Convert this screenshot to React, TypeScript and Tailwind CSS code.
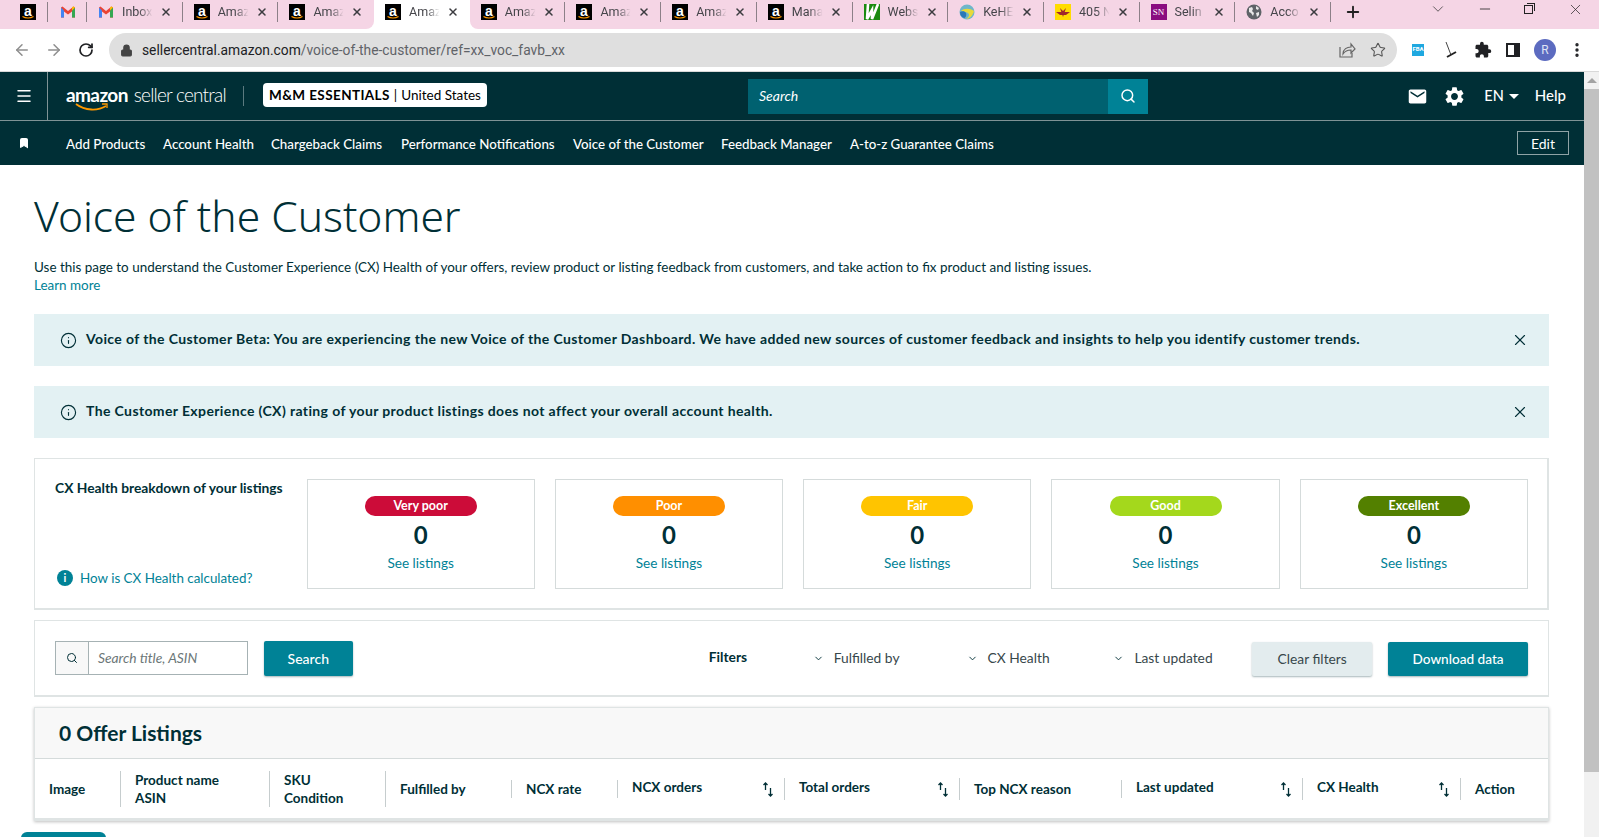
import React from "react";
import { ArrowLeft, ArrowRight, RotateCw, Lock, Star, Plus, X, Minus, ChevronDown, Search, Menu, Bookmark, Info, EllipsisVertical } from "lucide-react";
import { MdMail, MdSettings, MdExtension } from "react-icons/md";

const AmazonIcon = () => (
  <svg width="16" height="16" viewBox="0 0 16 16" className="shrink-0">
    <rect width="16" height="16" fill="#000" />
    <text x="8" y="11.5" textAnchor="middle" fontSize="14" fontWeight="700" fill="#fff" fontFamily="Liberation Sans, sans-serif">a</text>
    <path d="M2.5 12.5c3 2 8 2 11 0" stroke="#f90" strokeWidth="1.2" fill="none" />
  </svg>
);
const GmailIcon = () => (
  <svg width="16" height="16" viewBox="0 0 16 16" className="shrink-0">
    <path d="M1 3.5v10h3v-6l4 3 4-3v6h3v-10l-1.500-1L8 7 2.500 2.500z" fill="#ea4335" />
    <path d="M1 3.500v10h3v-7z" fill="#4285f4" />
    <path d="M15 3.500v10h-3v-7z" fill="#34a853" />
    <path d="M12 6.500V3l1.500-.5L15 3.500z" fill="#fbbc04" />
  </svg>
);
const WebsIcon = () => (
  <svg width="16" height="16" viewBox="0 0 16 16" className="shrink-0">
    <rect width="16" height="16" fill="#1a8a10" />
    <path d="M4 0l-1 15 5-9 0 9 6-15" stroke="#fff" strokeWidth="2.600" fill="none" />
  </svg>
);
const KeheIcon = () => (
  <svg width="16" height="16" viewBox="0 0 16 16" className="shrink-0">
    <circle cx="8" cy="8" r="7.500" fill="#6fb6c9" />
    <path d="M2 7c3-3 9-3 13 0-1 5-5 8-8 8 3-2 4-4 2-6-2-1-5-2-7-2z" fill="#e8d93a" />
    <path d="M1 8c2-1 5-1 6 1 1 3-1 5-2 5-3-1-4-3-4-6z" fill="#2a78b8" />
  </svg>
);
const FourOhFiveIcon = () => (
  <svg width="16" height="16" viewBox="0 0 16 16" className="shrink-0">
    <rect width="16" height="16" fill="#ffdc00" />
    <path d="M1 8h14l-4 3H5z" fill="#a0282c" />
    <path d="M5 4l3 9 3-9-3 3z" fill="#a0282c" />
  </svg>
);
const SnIcon = () => (
  <div className="w-4 h-4 shrink-0 bg-[#8a0c80] text-white text-[9px] leading-4 text-center font-['Liberation_Serif',serif]">SN</div>
);
const GlobeIcon = () => (
  <svg width="16" height="16" viewBox="0 0 16 16" className="shrink-0">
    <circle cx="8" cy="8" r="7.500" fill="#5f6368" />
    <path d="M3 4l3-1 1 2-1 2 2 2-1 3-2-3-2-1zM10 2l3 2-1 2-2-1zM10 9l3-1 0 3-2 2z" fill="#e8e8e8" />
  </svg>
);

type TabDef = { icon: React.ReactNode; label: string; round?: string; active?: boolean; sep?: boolean };
const tabs: TabDef[] = [
  { icon: <GmailIcon />, label: "Inbox", sep: true },
  { icon: <AmazonIcon />, label: "Amaz", sep: true },
  { icon: <AmazonIcon />, label: "Amaz", round: "rounded-br-lg" },
  { icon: <AmazonIcon />, label: "Amaz", active: true },
  { icon: <AmazonIcon />, label: "Amaz", round: "rounded-bl-lg", sep: true },
  { icon: <AmazonIcon />, label: "Amaz", sep: true },
  { icon: <AmazonIcon />, label: "Amaz", sep: true },
  { icon: <AmazonIcon />, label: "Mana", sep: true },
  { icon: <WebsIcon />, label: "Webs", sep: true },
  { icon: <KeheIcon />, label: "KeHE", sep: true },
  { icon: <FourOhFiveIcon />, label: "405 N", sep: true },
  { icon: <SnIcon />, label: "Selin", sep: true },
  { icon: <GlobeIcon />, label: "Acco", sep: true },
];

const TabStrip = () => (
  <div className="flex h-[29px] bg-white font-['Roboto',sans-serif]">
    <div className="w-[47.500px] bg-[#f5d5e5] flex items-start pt-1 pl-5 relative">
      <AmazonIcon />
      <span className="absolute right-0 top-[2px] h-5 w-px bg-[#8c8088]" />
    </div>
    <div className="w-[39.500px] bg-[#f5d5e5] flex items-start pt-1 pl-3 relative">
      <GmailIcon />
      <span className="absolute right-0 top-[2px] h-5 w-px bg-[#8c8088]" />
    </div>
    {tabs.map((t, i) => (
      <div key={i} className={`w-[95.700px] relative flex items-start pt-1 pl-[11px] ${t.active ? "bg-white" : "bg-[#f5d5e5]"} ${t.round ?? ""}`}>
        {t.icon}
        <span className="ml-[8px] w-[34px] whitespace-nowrap text-[12.500px] leading-4 text-[#45454a] [mask-image:linear-gradient(to_right,black_50%,transparent_90%)]">{t.label}</span>
        <X size={12} strokeWidth={3} className="ml-[4px] mt-[2px] text-[#3c3c40]" />
        {t.sep && <span className="absolute right-0 top-[2px] h-5 w-px bg-[#8c8088]" />}
      </div>
    ))}
    <div className="flex-1 bg-[#f5d5e5] flex items-start relative">
      <Plus size={18} strokeWidth={2.500} className="ml-[13px] mt-[3px] text-[#222]" />
      <ChevronDown size={18} strokeWidth={1} className="absolute left-[98px] top-[0px] text-[#333]" />
      <Minus size={16} strokeWidth={1.200} className="absolute left-[146px] top-[1px] text-[#222]" />
      <div className="absolute left-[193px] top-[5px] w-[9px] h-[9px] border border-[#222] bg-[#f5d5e5]" />
      <div className="absolute left-[196px] top-[3px] w-[8px] h-[8px] border-t border-r border-[#222]" />
      <X size={17} strokeWidth={1} className="absolute left-[236px] top-[1px] text-[#222]" />
    </div>
  </div>
);

const AddressBar = () => (
  <div className="h-[43px] bg-white flex items-center border-b border-[#d8d8d8] font-['Roboto',sans-serif]">
    <ArrowLeft size={18} strokeWidth={2} className="ml-[13px] text-[#8e8e8e]" />
    <ArrowRight size={18} strokeWidth={2} className="ml-[14px] text-[#8e8e8e]" />
    <RotateCw size={16} strokeWidth={2.600} className="ml-[15px] text-[#202124]" />
    <div className="ml-[15px] w-[1288px] h-[34px] rounded-full bg-[#dfdfdf] flex items-center pl-[11px]">
      <Lock size={13} fill="#444" strokeWidth={2} className="text-[#444]" />
      <span className="ml-[9px] text-[13.800px] text-[#5f6368]"><span className="text-[#202124]">sellercentral.amazon.com</span>/voice-of-the-customer/ref=xx_voc_favb_xx</span>
      <svg width="18" height="18" viewBox="0 0 18 18" className="ml-auto text-[#666]" fill="none" stroke="currentColor" strokeWidth="1.200">
        <path d="M2 6v10h12v-4" />
        <path d="M5 13c0-5 4-7 8-7V3l4 5-4 4V9c-4 0-6 1-8 4z" />
      </svg>
      <Star size={16} strokeWidth={1.600} className="ml-[14px] mr-[11px] text-[#555]" />
    </div>
    <div className="ml-[15px] w-[12px] h-[12px] bg-[#1fa8e0] text-white text-[6px] leading-[10px] font-bold text-center">FBA</div>
    <svg width="16" height="18" viewBox="0 0 16 18" className="ml-[19px]" fill="none">
      <path d="M3 1l5 13" stroke="#444" strokeWidth="1" />
      <path d="M4 16l9-5" stroke="#222" strokeWidth="2" />
    </svg>
    <MdExtension size={18} className="ml-[15px] text-[#202124]" />
    <div className="ml-[14px] w-[14px] h-[14px] border-[2px] border-[#202124] border-r-[6px] bg-white" />
    <div className="ml-[14px] w-[22px] h-[22px] rounded-full bg-[#5c6bc0] text-[#dfe3f5] text-[12px] leading-[22px] text-center">R</div>
    <EllipsisVertical size={18} strokeWidth={2.500} className="ml-[12px] text-[#202124]" />
  </div>
);

const Header = () => (
  <div className="bg-[#002f36] text-white">
    <div className="h-[49px] flex items-center border-b border-[#7f9396]">
      <div className="w-[48px] h-full flex items-center justify-center border-r border-[#7f9396]">
        <Menu size={18} strokeWidth={2} />
      </div>
      <div className="ml-[18px] w-[177px] relative flex items-baseline whitespace-nowrap -mt-[2px]">
        <span className="font-bold text-[19px] tracking-[-0.600px]">amazon</span>
        <span className="ml-[6px] font-light text-[19px] tracking-[-0.800px]">seller central</span>
        <svg width="34" height="9" viewBox="0 0 34 9" className="absolute left-[9px] top-[22px]" fill="none">
          <path d="M1 1c9 7 22 7 30 2" stroke="#f90" strokeWidth="1.800" />
          <path d="M27 1h5v4" stroke="#f90" strokeWidth="1.300" />
        </svg>
      </div>
      <div className="w-px h-5 bg-[#5b7a7f]" />
      <div className="ml-[19px] -mt-[2px] w-[224px] h-6 bg-white rounded-sm text-black text-[13.500px] flex items-center justify-center whitespace-nowrap">
        <span className="font-bold tracking-[0.400px]">M&amp;M ESSENTIALS</span>
        <span className="mx-1">|</span>
        <span>United States</span>
      </div>
      <div className="ml-[261px] w-[400px] h-[35px] flex">
        <div className="flex-1 bg-[#006170] flex items-center pl-[11px] pb-[2px] text-[14px] italic text-white">Search</div>
        <div className="w-[40px] bg-[#008296] flex items-center justify-center"><Search size={16} strokeWidth={2.200} /></div>
      </div>
      <MdMail size={21} className="ml-auto" />
      <MdSettings size={23} className="ml-[15px]" />
      <span className="ml-[18px] text-[14.500px] font-medium">EN</span>
      <span className="ml-[5px] w-0 h-0 border-x-[5px] border-x-transparent border-t-[5px] border-t-white" />
      <span className="ml-[16px] mr-[18px] -mt-[2px] text-[15px] font-medium">Help</span>
    </div>
    <div className="h-[44px] flex items-center">
      <Bookmark size={12} fill="#fff" className="ml-[18px]" />
      {[
        ["Add Products", "ml-[36px] w-[97px]"],
        ["Account Health", "w-[108px]"],
        ["Chargeback Claims", "w-[130px]"],
        ["Performance Notifications", "w-[172px]"],
        ["Voice of the Customer", "w-[148px]"],
        ["Feedback Manager", "w-[129px]"],
        ["A-to-z Guarantee Claims", "w-[150px]"],
      ].map(([t, c]) => (
        <span key={t} className={`${c} mt-[3px] text-[13.300px] font-medium whitespace-nowrap`}>{t}</span>
      ))}
      <div className="ml-auto mr-[15px] w-[52px] h-6 border border-[#8fa3a6] text-[14px] flex items-center justify-center">Edit</div>
    </div>
  </div>
);

const Alert = ({ children }: { children: React.ReactNode }) => (
  <div className="mt-[20px] h-[52px] bg-[#e3f1f3] flex items-center pl-[26px] pr-[20px]">
    <Info size={17} strokeWidth={1.600} className="text-[#002f36]" />
    <span className="ml-[9px] -mt-[4px] font-bold text-[14px] tracking-[0.380px]">{children}</span>
    <X size={18} strokeWidth={1.500} className="ml-auto" />
  </div>
);

const health = [
  ["Very poor", "bg-[#cc0c39]"],
  ["Poor", "bg-[#ff8f00]"],
  ["Fair", "bg-[#ffc400]"],
  ["Good", "bg-[#a4d81c]"],
  ["Excellent", "bg-[#538000]"],
];

const Breakdown = () => (
  <div className="mt-5 h-[152px] border-2 border-[#dfe4e4] border-t border-l flex pl-[20px] pr-[19px] pt-5">
    <div className="w-[251.500px] h-[110px] flex flex-col justify-between">
      <div className="-mt-[1px] font-bold text-[13.800px] leading-5">CX Health breakdown of your listings</div>
      <div className="flex items-center pl-[2px] pb-[1px] text-[13.400px] text-[#008296]">
        <span className="w-4 h-4 rounded-full bg-[#008296] text-white text-[11px] font-bold leading-4 text-center">i</span>
        <span className="ml-[7px]">How is CX Health calculated?</span>
      </div>
    </div>
    <div className="flex-1 flex gap-[20px]">
      {health.map(([label, color]) => (
        <div key={label} className="flex-1 h-[110px] border border-[#d5dbdb] flex flex-col items-center pt-4">
          <div className={`${color} w-[112px] h-5 rounded-full text-white font-bold text-[12.500px] leading-5 text-center`}>{label}</div>
          <div className="mt-[1px] text-[24px] font-bold leading-[36px]">0</div>
          <div className="text-[13.600px] text-[#008296]">See listings</div>
        </div>
      ))}
    </div>
  </div>
);

const FilterDrop = ({ label, w }: { label: string; w: string }) => (
  <div className={`${w} flex items-center mt-[1px] text-[13.800px] text-[#37474b]`}>
    <ChevronDown size={11} strokeWidth={2} className="text-[#002f36]" />
    <span className="ml-[10px]">{label}</span>
  </div>
);

const Filters = () => (
  <div className="mt-[10px] h-[77px] border border-[#dfe4e4] border-b-2 flex items-center pl-[20px] pr-[20px]">
    <div className="w-[193px] h-[34px] border border-[#a6b2b4] flex">
      <div className="w-[33px] bg-[#f8f8f8] border-r border-[#a6b2b4] flex items-center justify-center"><Search size={12} strokeWidth={2} /></div>
      <div className="flex-1 pl-[9px] flex items-center italic text-[13.800px] text-[#6c7778]">Search title, ASIN</div>
    </div>
    <div className="ml-[16px] w-[89px] h-[35px] bg-[#008296] rounded-[2px] shadow-[0_1px_2px_rgba(0,47,54,0.35)] text-white text-[14px] font-medium flex items-center justify-center">Search</div>
    <div className="ml-[356px] -mt-[2px] w-[104px] font-bold text-[13.800px]">Filters</div>
    <FilterDrop label="Fulfilled by" w="w-[154px]" />
    <FilterDrop label="CX Health" w="w-[147px]" />
    <FilterDrop label="Last updated" w="w-[139px]" />
    <div className="mt-[2px] w-[120px] h-[34px] bg-[#e3ecee] rounded-[2px] shadow-[0_1px_2px_rgba(0,47,54,0.35)] text-[#37474b] text-[13.800px] flex items-center justify-center">Clear filters</div>
    <div className="mt-[2px] ml-[16px] w-[140px] h-[34px] bg-[#008296] rounded-[2px] shadow-[0_1px_2px_rgba(0,47,54,0.35)] text-white text-[13.600px] font-medium flex items-center justify-center">Download data</div>
  </div>
);

const Sort = () => (
  <svg width="12" height="15" viewBox="0 0 12 15" fill="none" stroke="#002f36" strokeWidth="1.300">
    <path d="M3.500 8V1M1.500 3l2-2 2 2" />
    <path d="M8.500 6v8M6.500 12l2 2 2-2" />
  </svg>
);

const columns: { w: string; lines: string[]; h: string; sort?: boolean; up?: boolean; sep?: boolean }[] = [
  { w: "w-[85px]", lines: ["Image"], h: "h-[18px]" },
  { w: "w-[149px]", lines: ["Product name", "ASIN"], h: "h-[36px]", sep: true },
  { w: "w-[116px]", lines: ["SKU", "Condition"], h: "h-[36px]", sep: true },
  { w: "w-[126px]", lines: ["Fulfilled by"], h: "h-[36px]", sep: true },
  { w: "w-[106px]", lines: ["NCX rate"], h: "h-[18px]", sep: true },
  { w: "w-[167px]", lines: ["NCX orders"], h: "h-[18px]", sep: true, sort: true, up: true },
  { w: "w-[175px]", lines: ["Total orders"], h: "h-[22px]", sep: true, sort: true, up: true },
  { w: "w-[162px]", lines: ["Top NCX reason"], h: "h-[22px]", sep: true },
  { w: "w-[181px]", lines: ["Last updated"], h: "h-[18px]", sep: true, sort: true, up: true },
  { w: "w-[158px]", lines: ["CX Health"], h: "h-[22px]", sep: true, sort: true, up: true },
  { w: "flex-1", lines: ["Action"], h: "h-[22px]", sep: true },
];

const Table = () => (
  <div className="mt-[10px] h-[114px] border border-[#dfe4e4] border-b-[3px] shadow-[0_1px_3px_rgba(0,0,0,0.25)]">
    <div className="h-[51px] bg-[#f8f8f8] border-b border-[#d5dbdb] flex items-center pl-[24px] text-[21px] font-bold">0 Offer Listings</div>
    <div className="h-[60px] flex items-center">
      {columns.map((c) => (
        <div key={c.lines[0]} className={`${c.w} ${c.h} flex items-center pl-[14px] pr-[10px] ${c.sep ? "border-l border-[#c6cdce]" : ""}`}>
          <div className={`font-bold text-[13.500px] leading-[18px] whitespace-nowrap ${c.up ? "-mt-[4px]" : ""}`}>
            {c.lines.map((l) => <div key={l}>{l}</div>)}
          </div>
          {c.sort && <div className="ml-auto"><Sort /></div>}
        </div>
      ))}
    </div>
  </div>
);

const Scrollbar = () => (
  <div className="w-[15px] shrink-0 bg-[#f1f1f1] flex flex-col items-center">
    <span className="mt-[6px] w-0 h-0 border-x-[5px] border-x-transparent border-b-[5px] border-b-[#a3a3a3]" />
    <div className="mt-[6px] w-full h-[683px] bg-[#c1c1c1]" />
  </div>
);

export default function App() {
  return (
    <div className="h-[837px] flex flex-col overflow-hidden bg-white text-[#002f36] font-['Lato',sans-serif]">
      <TabStrip />
      <AddressBar />
      <div className="flex flex-1 min-h-0">
        <div className="flex-1 min-w-0 flex flex-col overflow-hidden">
          <Header />
          <main className="pl-[34px] pr-[35px]">
            <h1 className="mt-[23px] text-[42.500px] leading-[56px] font-light font-['Noto_Sans',sans-serif]">Voice of the Customer</h1>
            <p className="mt-[14px] text-[13.450px] leading-[18px]">Use this page to understand the Customer Experience (CX) Health of your offers, review product or listing feedback from customers, and take action to fix product and listing issues.</p>
            <a className="block text-[13.450px] leading-[18px] text-[#008296]">Learn more</a>
            <Alert>Voice of the Customer Beta: You are experiencing the new Voice of the Customer Dashboard. We have added new sources of customer feedback and insights to help you identify customer trends.</Alert>
            <Alert>The Customer Experience (CX) rating of your product listings does not affect your overall account health.</Alert>
            <Breakdown />
            <Filters />
            <Table />
            <div className="-ml-[13px] mt-[11px] w-[85px] h-[20px] bg-[#008296] rounded-t-md" />
          </main>
        </div>
        <Scrollbar />
      </div>
    </div>
  );
}
